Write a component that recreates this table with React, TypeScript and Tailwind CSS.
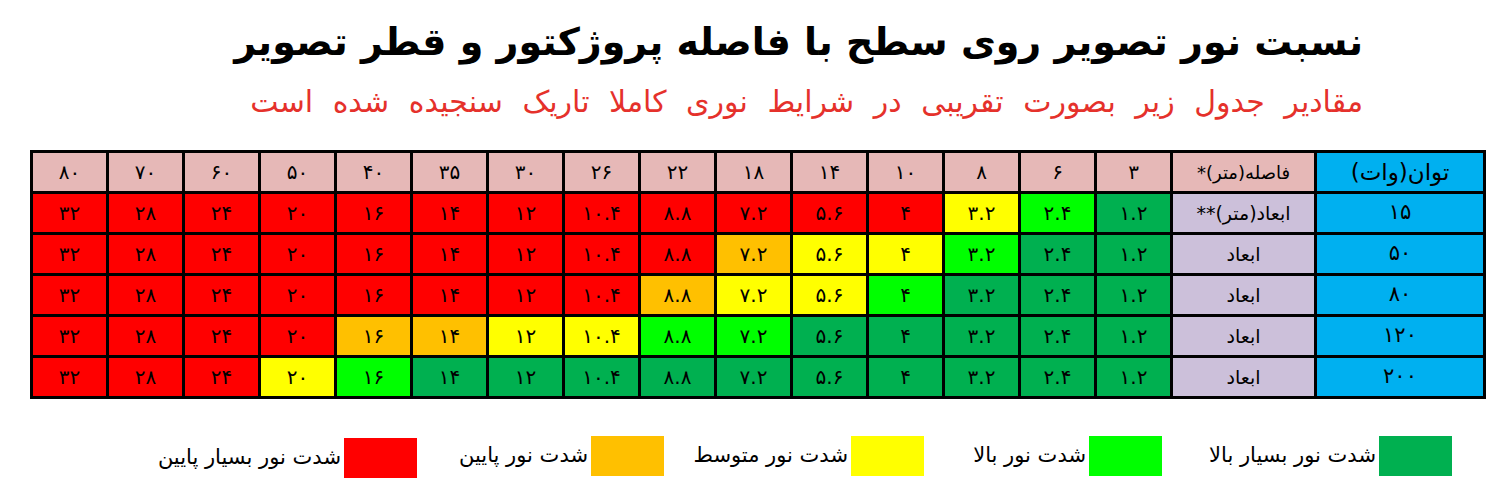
const fa = (s: string) => s.replace(/\d/g, (d) => '۰۱۲۳۴۵۶۷۸۹'[Number(d)])

const distances = [3, 6, 8, 10, 14, 18, 22, 26, 30, 35, 40, 50, 60, 70, 80]
const sizes = ['1.2', '2.4', '3.2', '4', '5.6', '7.2', '8.8', '10.4', '12', '14', '16', '20', '24', '28', '32']

// g = very high, l = high, y = medium, o = low, r = very low
const rows = [
  { power: '15', label: 'ابعاد(متر)**', colors: 'glyrrrrrrrrrrrr' },
  { power: '50', label: 'ابعاد', colors: 'gglyyorrrrrrrrr' },
  { power: '80', label: 'ابعاد', colors: 'ggglyyorrrrrrrr' },
  { power: '120', label: 'ابعاد', colors: 'gggggllyyoorrrr' },
  { power: '200', label: 'ابعاد', colors: 'gggggggggglyrrr' },
]

const cellColor: Record<string, string> = {
  g: 'bg-[#00b050]',
  l: 'bg-[#00ff00]',
  y: 'bg-[#ffff00]',
  o: 'bg-[#ffc000]',
  r: 'bg-[#ff0000]',
}

const legend = [
  { color: 'bg-[#00b050]', text: 'شدت نور بسیار بالا', width: 'w-[290px]' },
  { color: 'bg-[#00ff00]', text: 'شدت نور بالا', width: 'w-[238px]' },
  { color: 'bg-[#ffff00]', text: 'شدت نور متوسط', width: 'w-[260px]' },
  { color: 'bg-[#ffc000]', text: 'شدت نور پایین', width: 'w-[247px]' },
  { color: 'bg-[#ff0000]', text: 'شدت نور بسیار پایین', width: 'w-[280px]', low: true },
]

const cell = 'border-[3px] border-black text-center align-middle p-0'

export default function App() {
  return (
    <div
      dir="rtl"
      className="w-[1507px] h-[500px] bg-white text-black overflow-hidden"
      style={{ fontFamily: '"DejaVu Sans", "Noto Sans", sans-serif' }}
    >
      <div className="pr-[144px] pt-[16px]">
        <h1 className="text-[38px] leading-[52px] font-bold whitespace-nowrap">
          نسبت نور تصویر روی سطح با فاصله پروژکتور و قطر تصویر
        </h1>
        <p className="text-[30px] leading-[44px] text-[#e5312b] mt-[12px] whitespace-nowrap [word-spacing:10px]">
          مقادیر جدول زیر بصورت تقریبی در شرایط نوری کاملا تاریک سنجیده شده است
        </p>
      </div>

      <div className="pr-[21px] mt-[26px]">
        <table className="table-fixed border-collapse w-[1451px]">
          <colgroup>
            <col className="w-[169px]" />
            <col className="w-[144px]" />
            {distances.map((d) => (
              <col key={d} className="w-[76px]" />
            ))}
          </colgroup>
          <tbody>
            <tr className="h-[41px] text-[20px]">
              <td className={`${cell} bg-[#00b0f0] text-[23px]`}>توان(وات)</td>
              <td className={`${cell} bg-[#e6b8b7] text-[18px]`}>فاصله(متر)*</td>
              {distances.map((d) => (
                <td key={d} className={`${cell} bg-[#e6b8b7]`}>
                  {fa(String(d))}
                </td>
              ))}
            </tr>
            {rows.map((row) => (
              <tr key={row.power} className="h-[41px] text-[20px]">
                <td className={`${cell} bg-[#00b0f0] text-[21px]`}>{fa(row.power)}</td>
                <td className={`${cell} bg-[#ccc0da] text-[19px]`}>{row.label}</td>
                {sizes.map((s, i) => (
                  <td key={i} className={`${cell} ${cellColor[row.colors[i]]}`}>
                    <span dir="ltr">{fa(s)}</span>
                  </td>
                ))}
              </tr>
            ))}
          </tbody>
        </table>
      </div>

      <div className="flex pr-[55px] mt-[35px] text-[21px]">
        {legend.map((item) => (
          <div key={item.text} className={`flex items-center shrink-0 ${item.width} ${item.low ? 'mt-[4px]' : ''}`}>
            <div className={`w-[73px] h-[40px] shrink-0 ${item.color}`} />
            <span className="mr-[3px] whitespace-nowrap">{item.text}</span>
          </div>
        ))}
      </div>
    </div>
  )
}
